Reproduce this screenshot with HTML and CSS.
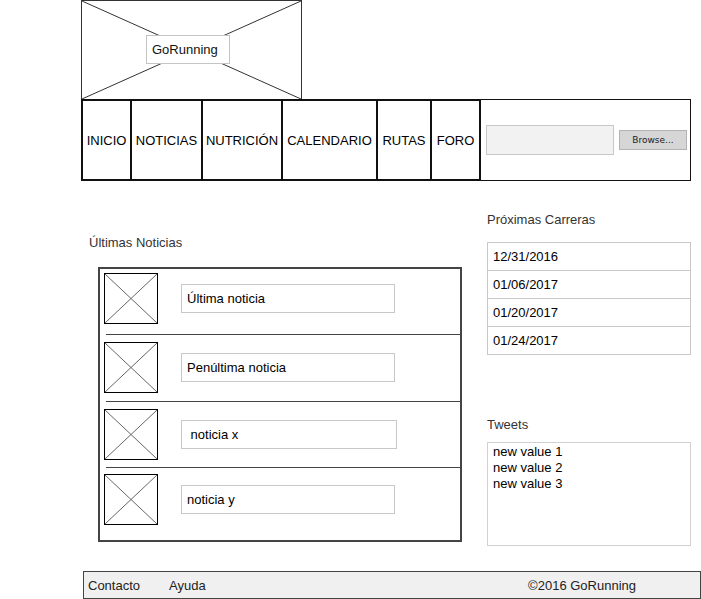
FILE: index.html
```html
<!DOCTYPE html>
<html lang="es">
<head>
  <meta charset="UTF-8">
  <meta name="viewport" content="width=device-width, initial-scale=1.0">
  <title>GoRunning</title>
  <link rel="stylesheet" href="styles.css">
</head>
<body>
  <div class="logo">
    <svg class="logo-x" viewBox="0 0 219 98" preserveAspectRatio="none">
      <line x1="0" y1="0" x2="219" y2="98" />
      <line x1="219" y1="0" x2="0" y2="98" />
    </svg>
    <div class="logo-label">GoRunning</div>
  </div>

  <div class="nav">
    <a class="nav-item w-inicio">INICIO</a>
    <a class="nav-item w-noticias">NOTICIAS</a>
    <a class="nav-item w-nutricion">NUTRICIÓN</a>
    <a class="nav-item w-calendario">CALENDARIO</a>
    <a class="nav-item w-rutas">RUTAS</a>
    <a class="nav-item nav-last w-foro">FORO</a>
    <div class="nav-search">
      <div class="file-input"></div>
      <div class="file-btn">Browse...</div>
    </div>
  </div>

  <div class="main">
    <div class="col-left">
      <h3 class="section-title">Últimas Noticias</h3>
      <div class="news-box">
        <div class="news-row">
          <svg class="thumb" viewBox="0 0 52 49" preserveAspectRatio="none"><line x1="0" y1="0" x2="52" y2="49"/><line x1="52" y1="0" x2="0" y2="49"/></svg>
          <div class="news-title">Última noticia</div>
        </div>
        <hr class="news-sep">
        <div class="news-row row-2">
          <svg class="thumb" viewBox="0 0 52 49" preserveAspectRatio="none"><line x1="0" y1="0" x2="52" y2="49"/><line x1="52" y1="0" x2="0" y2="49"/></svg>
          <div class="news-title">Penúltima noticia</div>
        </div>
        <hr class="news-sep">
        <div class="news-row row-3">
          <svg class="thumb" viewBox="0 0 52 49" preserveAspectRatio="none"><line x1="0" y1="0" x2="52" y2="49"/><line x1="52" y1="0" x2="0" y2="49"/></svg>
          <div class="news-title wide">&nbsp;noticia x</div>
        </div>
        <hr class="news-sep">
        <div class="news-row row-4">
          <svg class="thumb" viewBox="0 0 52 49" preserveAspectRatio="none"><line x1="0" y1="0" x2="52" y2="49"/><line x1="52" y1="0" x2="0" y2="49"/></svg>
          <div class="news-title">noticia y</div>
        </div>
      </div>
    </div>

    <div class="col-right">
      <h3 class="section-title races-title">Próximas Carreras</h3>
      <ul class="races">
        <li>12/31/2016</li>
        <li>01/06/2017</li>
        <li>01/20/2017</li>
        <li>01/24/2017</li>
      </ul>

      <h3 class="section-title tweets-title">Tweets</h3>
      <div class="tweets">
        <div>new value 1</div>
        <div>new value 2</div>
        <div>new value 3</div>
      </div>
    </div>
  </div>

  <div class="footer">
    <span>Contacto</span>
    <span class="footer-help">Ayuda</span>
    <span class="footer-copy">©2016 GoRunning</span>
  </div>
</body>
</html>
```

FILE: styles.css
```css
body {
  margin: 0;
  font-family: "Liberation Sans", Arial, sans-serif;
  font-size: 13px;
  color: #111;
}

/* header */
.logo {
  position: relative;
  box-sizing: border-box;
  width: 221px;
  height: 99px;
  margin-left: 81px;
  border: 1px solid #333;
  border-bottom: none;
  display: flex;
  align-items: center;
  padding-left: 64px;
}
.logo-x {
  position: absolute;
  left: 0;
  top: 0;
  width: 100%;
  height: 100%;
}
.logo-x line {
  stroke: #333;
  stroke-width: 1;
}
.logo-label {
  position: relative;
  box-sizing: border-box;
  width: 84px;
  height: 29px;
  margin-top: -1px;
  padding-left: 5px;
  line-height: 27px;
  background: white;
  border: 1px solid #c4c4c4;
}

.nav {
  display: flex;
  width: 610px;
  height: 82px;
  margin-left: 81px;
}
.nav-item {
  box-sizing: border-box;
  display: flex;
  align-items: center;
  justify-content: center;
  border: 2px solid #111;
  border-right: none;
  color: #000;
}
.nav-last {
  border-right: 2px solid #111;
}
.w-inicio { width: 49px; }
.w-noticias { width: 71px; }
.w-nutricion { width: 80px; }
.w-calendario { width: 95px; }
.w-rutas { width: 54px; }
.w-foro { width: 51px; }
.nav-search {
  box-sizing: border-box;
  flex: 1;
  display: flex;
  align-items: center;
  padding-left: 5px;
  border: 1px solid #111;
  border-left: none;
}
.file-input {
  box-sizing: border-box;
  width: 128px;
  height: 30px;
  margin-top: -1px;
  background: #f2f2f2;
  border: 1px solid #c8c8c8;
}
.file-btn {
  box-sizing: border-box;
  width: 68px;
  height: 20px;
  margin-left: 5px;
  margin-top: -1px;
  background: #d6d6d6;
  border: 1px solid #b2b2b2;
  font-family: "DejaVu Sans", sans-serif;
  font-size: 9px;
  line-height: 18px;
  text-align: center;
  color: #222;
}

/* content */
.main {
  display: flex;
  align-items: flex-start;
}
.section-title {
  margin: 0;
  font-size: 13px;
  font-weight: normal;
  line-height: 16px;
  color: #333;
}
.col-left {
  width: 373px;
  margin-left: 89px;
  padding-top: 54px;
}
.news-box {
  box-sizing: border-box;
  width: 364px;
  height: 275px;
  margin: 16px 0 0 9px;
  border: 2px solid #444;
}
.news-row {
  display: flex;
  align-items: center;
  padding: 4px 0 10px 4px;
}
.news-row.row-2 {
  padding: 7px 0 8px 4px;
}
.news-row.row-3 {
  padding: 7px 0 7px 4px;
}
.news-row.row-4 {
  padding: 6px 0 0 4px;
}
.thumb {
  box-sizing: border-box;
  width: 54px;
  height: 51px;
  border: 1px solid #000;
}
.thumb line {
  stroke: #666;
  stroke-width: 1;
}
.news-title {
  box-sizing: border-box;
  width: 214px;
  height: 29px;
  margin-left: 23px;
  padding-left: 5px;
  line-height: 27px;
  border: 1px solid #c8c8c8;
  color: #000;
}
.news-title.wide {
  width: 216px;
}
.news-sep {
  height: 0;
  margin: 0 0 0 6px;
  border: none;
  border-top: 1px solid #444;
}

.col-right {
  width: 204px;
  margin-left: 25px;
  padding-top: 31px;
}
.races {
  list-style: none;
  margin: 14px 0 0;
  padding: 0;
  border: 1px solid #c8c8c8;
}
.races li {
  height: 27px;
  padding-left: 5px;
  line-height: 27px;
  border-top: 1px solid #c8c8c8;
  color: #000;
}
.races li:first-child {
  border-top: none;
}
.tweets-title {
  margin-top: 62px;
}
.tweets {
  box-sizing: border-box;
  height: 104px;
  margin-top: 9px;
  padding: 1px 5px 0;
  line-height: 16px;
  border: 1px solid #d0d0d0;
  color: #000;
}

/* footer */
.footer {
  box-sizing: border-box;
  display: flex;
  align-items: center;
  width: 618px;
  height: 28px;
  margin: 25px 0 0 83px;
  padding-left: 4px;
  background: #f0f0f0;
  border: 1px solid #444;
  color: #222;
}
.footer-help {
  margin-left: 29px;
}
.footer-copy {
  margin-left: auto;
  margin-right: 64px;
}
```
